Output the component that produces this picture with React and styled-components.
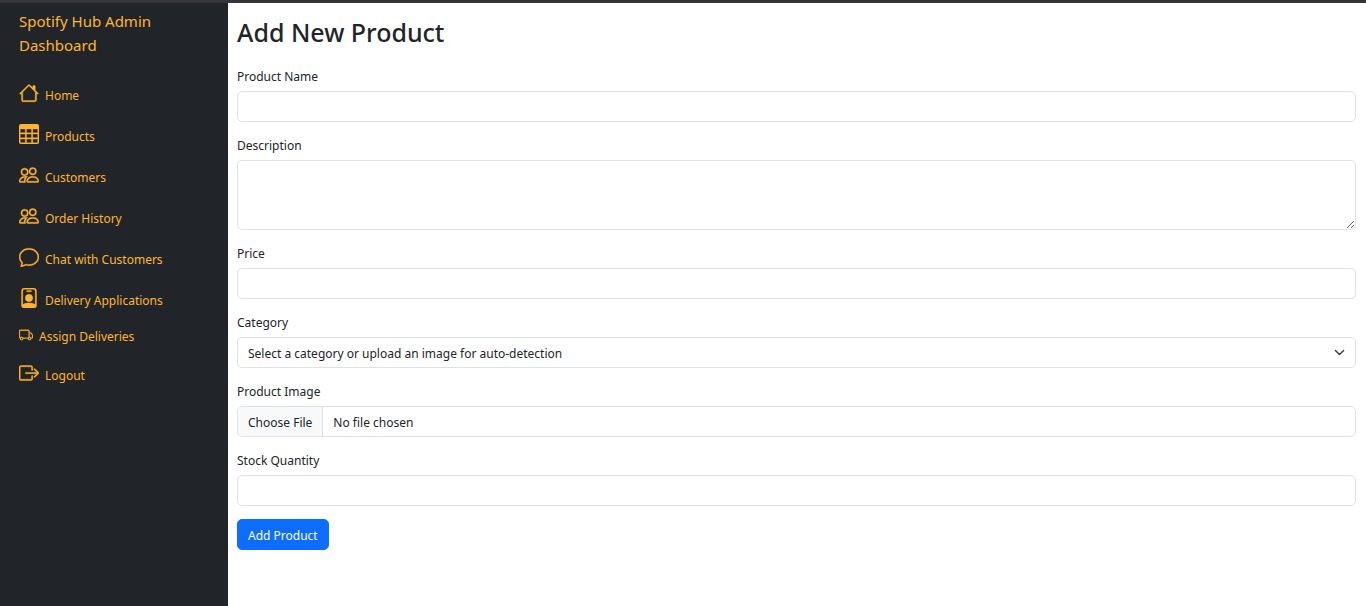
import React from 'react';
import styled, { createGlobalStyle } from 'styled-components';
import {
  BsHouse,
  BsTable,
  BsPeople,
  BsChat,
  BsPersonBadge,
  BsTruck,
  BsBoxArrowRight,
} from 'react-icons/bs';

const GlobalStyle = createGlobalStyle`
  *, *::before, *::after { box-sizing: border-box; }
  body {
    margin: 0;
    background: #fff;
    color: #212529;
    font-family: "Segoe UI", "Noto Sans", "Open Sans", sans-serif;
    font-size: 12px;
    line-height: 19px;
  }
`;

const Page = styled.div`
  display: flex;
  min-height: 100vh;
  border-top: 3px solid #37343b;
`;

const Sidebar = styled.aside`
  flex: 0 0 228px;
  padding: 6px 19px;
  background: #212529;
  color: #ffb52e;
`;

const Brand = styled.a`
  display: block;
  margin-bottom: 15px;
  color: inherit;
  font-size: 15px;
  line-height: 24px;
  text-decoration: none;
`;

const NavList = styled.ul`
  margin: 0;
  padding: 0;
  list-style: none;
`;

const NavLink = styled.a`
  display: flex;
  align-items: center;
  gap: 6px;
  height: ${({ $compact }) => ($compact ? '34px' : '41px')};
  color: inherit;
  text-decoration: none;

  svg {
    flex: none;
    width: ${({ $compact }) => ($compact ? '14px' : '20px')};
    height: ${({ $compact }) => ($compact ? '14px' : '20px')};
    stroke: currentColor;
    stroke-width: 0.3;
  }

  span {
    padding-top: ${({ $compact }) => ($compact ? '2px' : '5px')};
  }
`;

const Main = styled.main`
  flex: 1;
  min-width: 0;
  padding: 14px 10px 24px 9px;
`;

const Title = styled.h1`
  margin: 0 0 18px;
  font-size: 25px;
  font-weight: 500;
  line-height: 31px;
`;

const Form = styled.form`
  display: flex;
  flex-direction: column;
  align-items: flex-start;
  gap: 13px;
`;

const Field = styled.div`
  display: flex;
  flex-direction: column;
  gap: 5px;
  width: 100%;
`;

const Label = styled.label`
  align-self: flex-start;
  padding-top: 1px;
`;

const Input = styled.input`
  width: 100%;
  height: 31px;
  padding: 6px 10px 4px;
  border: 1px solid #dee2e6;
  border-radius: 5px;
  background: #fff;
  color: inherit;
  font: inherit;
`;

const FileInput = styled(Input)`
  overflow: hidden;

  &::file-selector-button {
    margin: -6px 10px -4px -10px;
    padding: 6px 10px 4px;
    border: 0 solid #dee2e6;
    border-right-width: 1px;
    background: #f8f9fa;
    color: inherit;
    font: inherit;
  }
`;

const TextArea = styled.textarea`
  display: block;
  width: 100%;
  height: 70px;
  padding: 5px 10px;
  border: 1px solid #dee2e6;
  border-radius: 5px;
  color: inherit;
  font: inherit;
  resize: vertical;
`;

const SelectBox = styled.div`
  display: grid;
  align-items: center;

  > * { grid-area: 1 / 1; }

  svg {
    justify-self: end;
    width: 11px;
    height: 11px;
    margin-right: 11px;
    pointer-events: none;
  }
`;

const Select = styled.select`
  width: 100%;
  height: 31px;
  padding: 6px 30px 4px 10px;
  border: 1px solid #dee2e6;
  border-radius: 5px;
  appearance: none;
  background: #fff;
  color: inherit;
  font: inherit;
`;

const SubmitButton = styled.button`
  height: 31px;
  padding: 6px 10px 4px;
  border: 1px solid #0d6efd;
  border-radius: 5px;
  background: #0d6efd;
  color: #fff;
  font: inherit;
  cursor: pointer;
`;

const links = [
  { label: 'Home', Icon: BsHouse },
  { label: 'Products', Icon: BsTable },
  { label: 'Customers', Icon: BsPeople },
  { label: 'Order History', Icon: BsPeople },
  { label: 'Chat with Customers', Icon: BsChat },
  { label: 'Delivery Applications', Icon: BsPersonBadge },
  { label: 'Assign Deliveries', Icon: BsTruck, compact: true },
  { label: 'Logout', Icon: BsBoxArrowRight },
];

export default function App() {
  return (
    <>
      <GlobalStyle />
      <Page>
        <Sidebar>
          <Brand href="#">Spotify Hub Admin Dashboard</Brand>
          <nav>
            <NavList>
              {links.map(({ label, Icon, compact }) => (
                <li key={label}>
                  <NavLink href="#" $compact={compact}>
                    <Icon aria-hidden="true" />
                    <span>{label}</span>
                  </NavLink>
                </li>
              ))}
            </NavList>
          </nav>
        </Sidebar>
        <Main>
          <Title>Add New Product</Title>
          <Form>
            <Field>
              <Label htmlFor="name">Product Name</Label>
              <Input id="name" type="text" />
            </Field>
            <Field>
              <Label htmlFor="description">Description</Label>
              <TextArea id="description" />
            </Field>
            <Field>
              <Label htmlFor="price">Price</Label>
              <Input id="price" type="text" inputMode="decimal" />
            </Field>
            <Field>
              <Label htmlFor="category">Category</Label>
              <SelectBox>
                <Select id="category">
                  <option>Select a category or upload an image for auto-detection</option>
                </Select>
                <svg viewBox="0 0 16 16" fill="none" stroke="#343a40" strokeWidth="2" strokeLinecap="round" strokeLinejoin="round" aria-hidden="true">
                  <path d="m2 5 6 6 6-6" />
                </svg>
              </SelectBox>
            </Field>
            <Field>
              <Label htmlFor="image">Product Image</Label>
              <FileInput id="image" type="file" />
            </Field>
            <Field>
              <Label htmlFor="stock">Stock Quantity</Label>
              <Input id="stock" type="text" inputMode="numeric" />
            </Field>
            <SubmitButton type="submit">Add Product</SubmitButton>
          </Form>
        </Main>
      </Page>
    </>
  );
}
